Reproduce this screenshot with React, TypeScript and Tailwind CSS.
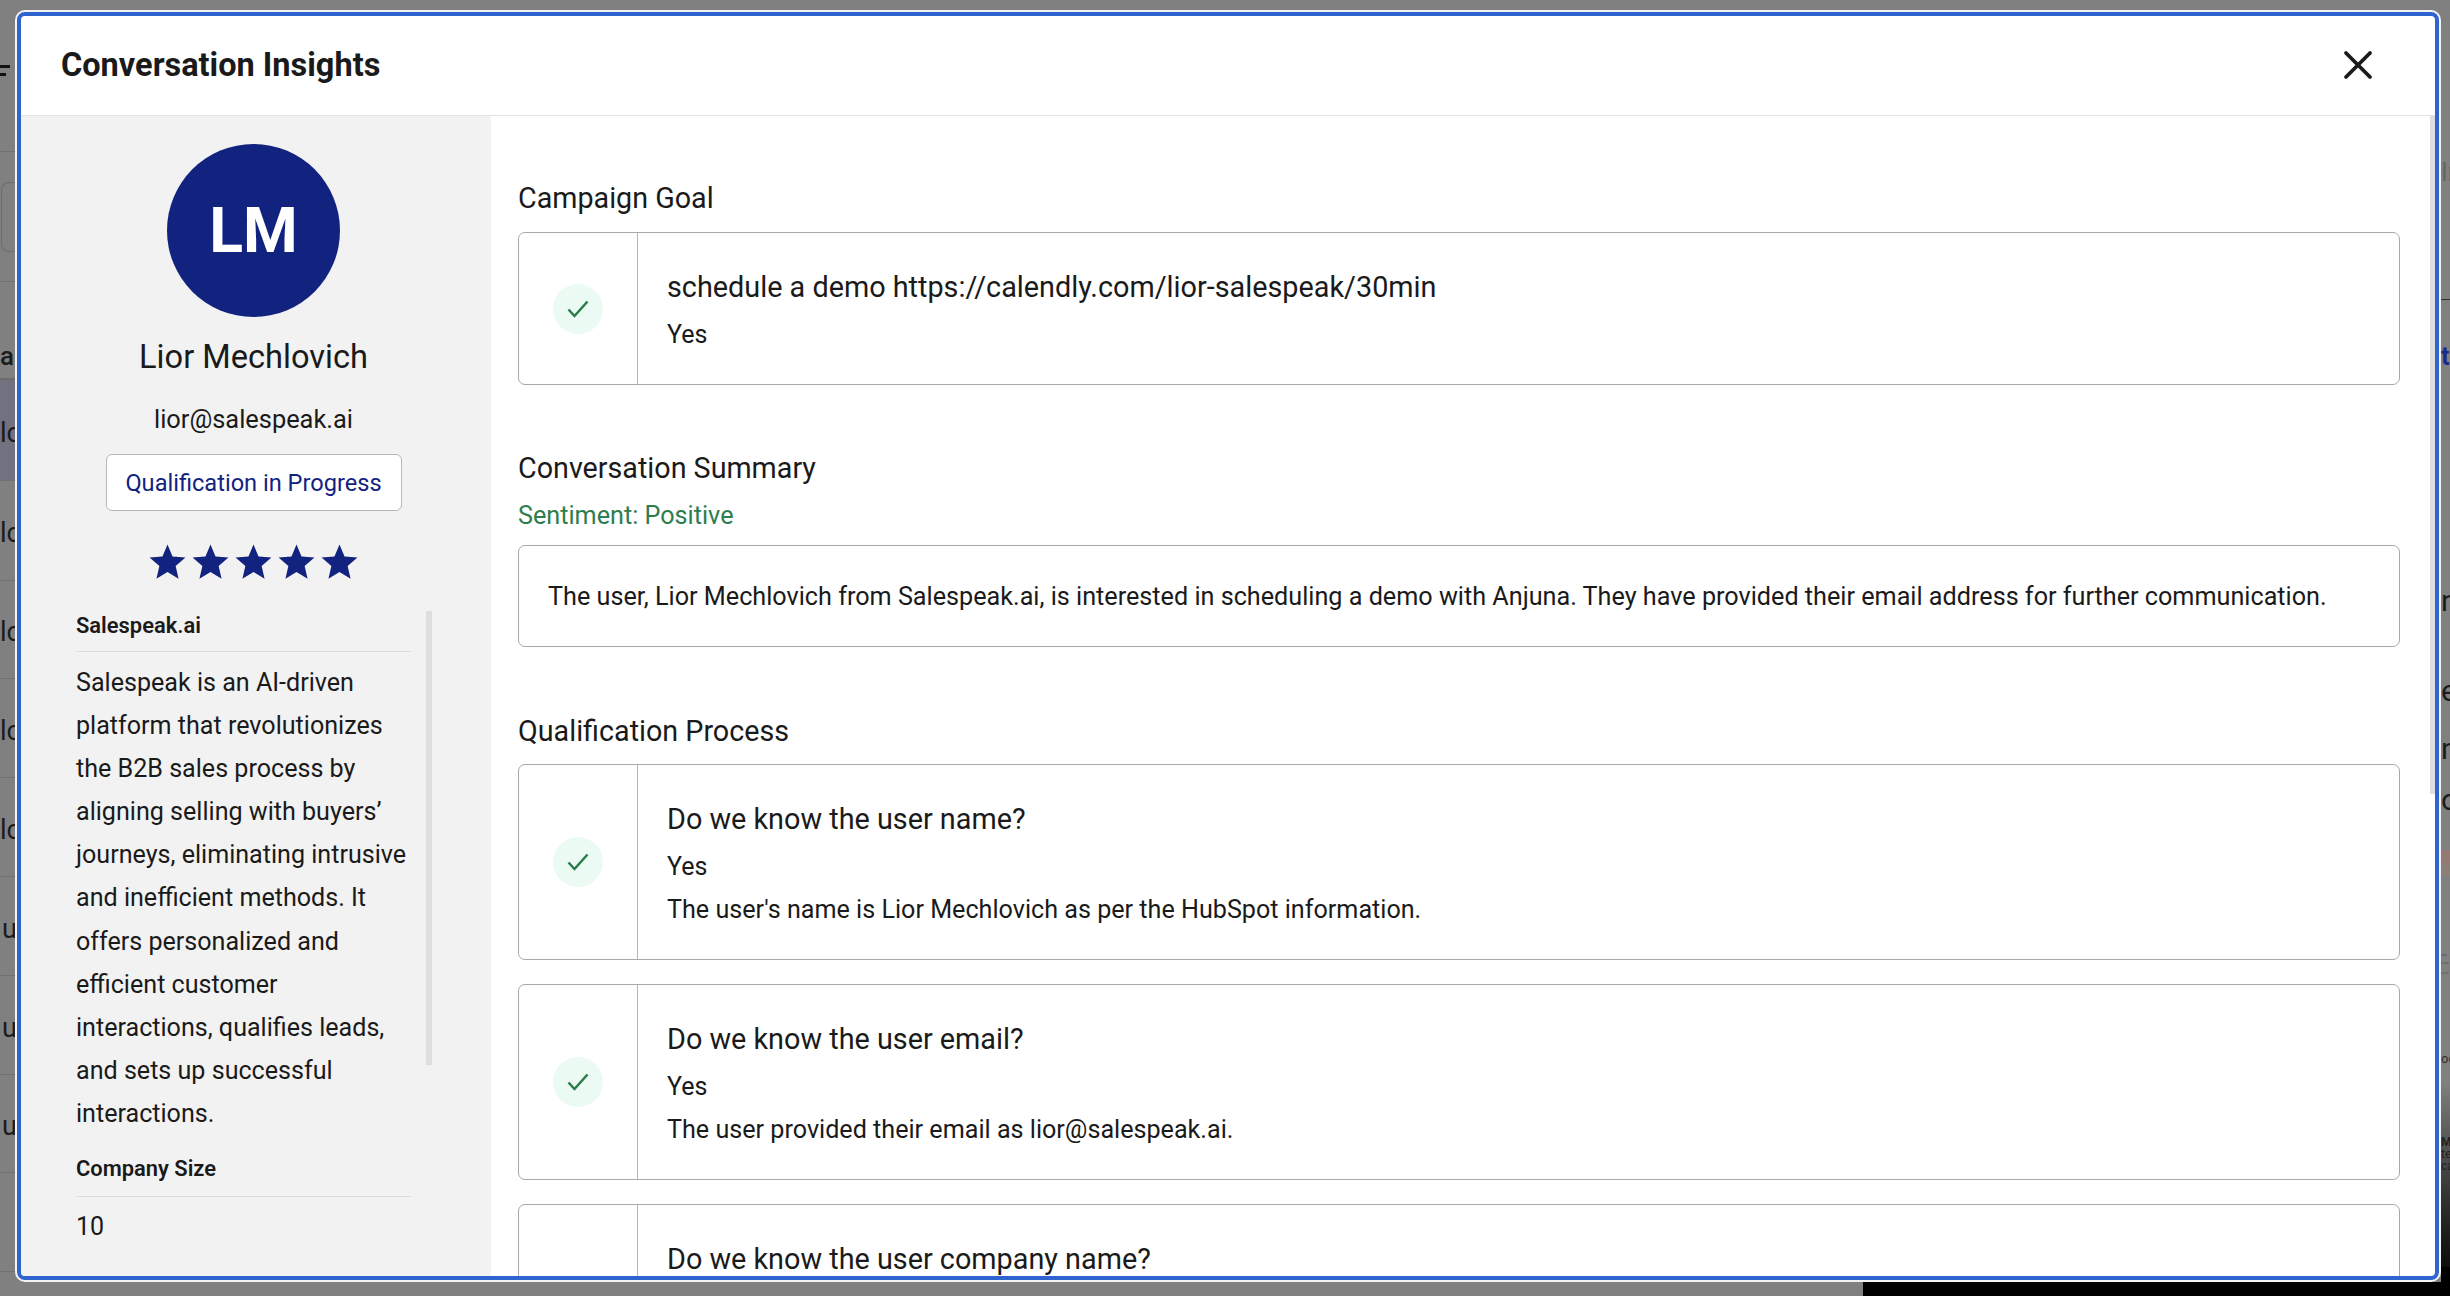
import React from 'react';
import { X } from 'lucide-react';

const NAVY = 'text-[#12237f]';

function CheckBadge() {
  return (
    <div className="flex w-[119px] shrink-0 items-center justify-center border-r border-[#b4b4b4]">
      <div className="flex h-[50px] w-[50px] items-center justify-center rounded-full bg-[#ebfbf3]">
        <svg width="24" height="20" viewBox="0 0 24 20" fill="none">
          <path d="M2.5 10.5 L8.5 17 L21.5 2.5" stroke="#2a7a4a" strokeWidth="2.5" />
        </svg>
      </div>
    </div>
  );
}

function Star() {
  return (
    <svg width="43" height="43" viewBox="0 0 24 24" fill="#12237f">
      <path d="M12 17.27 18.18 21l-1.64-7.03L22 9.24l-7.19-.61L12 2 9.19 8.63 2 9.24l5.46 4.73L5.82 21z" />
    </svg>
  );
}

function QuestionCard({ title, answer, detail }: { title: string; answer: string; detail?: string }) {
  return (
    <div className="flex rounded-[7px] border border-[#a8a8a8] bg-white">
      <CheckBadge />
      <div className="flex-1 pb-[31px] pl-[29px] pr-[28px] pt-[34px]">
        <div className="text-[28.8px] leading-[40px] text-[#1a1a1a]">{title}</div>
        <div className="mt-[10px] text-[25px] leading-[36px] text-[#1a1a1a]">{answer}</div>
        {detail && <div className="mt-[7px] text-[25.15px] leading-[36px] text-[#1a1a1a]">{detail}</div>}
      </div>
    </div>
  );
}

function LeftRow({ h, text, className = '' }: { h: string; text?: string; className?: string }) {
  return (
    <div className={`flex items-center overflow-hidden whitespace-nowrap border-b border-[#707070] pt-[6px] text-[27px] text-[#1c1c1c] ${h} ${className}`}>
      {text}
    </div>
  );
}

function BackgroundPage() {
  return (
    <div className="absolute inset-0 flex justify-between bg-[#808080]">
      <div className="w-[15px]">
        <div className="h-[152px] border-b border-[#707070] pt-[65px]">
          <div className="h-[3px] w-[10px] bg-[#111]" />
          <div className="mt-[5px] h-[3px] w-[6px] bg-[#111]" />
        </div>
        <div className="h-[130px] border-b border-[#707070] pt-[30px]">
          <div className="ml-[1px] h-[70px] rounded-l-[8px] border border-r-0 border-[#6c6c6c]" />
        </div>
        <div className="flex h-[98px] items-end overflow-hidden border-b-2 border-[#6c6c6c] pb-[2px] text-[26px] font-medium text-[#1c1c1c]">as</div>
        <LeftRow h="h-[101px]" text="lc" className="bg-[#717180]" />
        <LeftRow h="h-[100px]" text="lc" />
        <LeftRow h="h-[98px]" text="lc" />
        <LeftRow h="h-[99px]" text="lc" />
        <LeftRow h="h-[99px]" text="lc" />
        <LeftRow h="h-[99px]" text="u" className="pl-[2px]" />
        <LeftRow h="h-[99px]" text="u" className="pl-[2px]" />
        <LeftRow h="h-[98px]" text="u" className="pl-[2px]" />
        <LeftRow h="h-[99px]" />
      </div>
      <div className="flex w-[9px] flex-col overflow-hidden whitespace-nowrap">
        <div className="h-[158px]" />
        <div className="h-[30px] text-[25px] leading-[30px] text-[#666]">Ir</div>
        <div className="h-[111px]" />
        <div className="h-[1px] bg-[#333]" />
        <div className="h-[43px]" />
        <div className="h-[28px] text-[25px] font-bold leading-[28px] text-[#1a2a90]">ti</div>
        <div className="h-[213px]" />
        <div className="h-[34px] text-[30px] leading-[34px] text-[#1c1c1c]">n</div>
        <div className="h-[56px]" />
        <div className="h-[34px] text-[30px] leading-[34px] text-[#1c1c1c]">e</div>
        <div className="h-[24px]" />
        <div className="h-[34px] text-[30px] leading-[34px] text-[#1c1c1c]">n</div>
        <div className="h-[17px]" />
        <div className="h-[34px] text-[30px] leading-[34px] text-[#1c1c1c]">o</div>
        <div className="h-[33px]" />
        <div className="h-[14px] bg-[#937a74]" />
        <div className="h-[12px] bg-[#8a8078]" />
        <div className="h-[78px]" />
        <div className="h-[2px] w-[6px] bg-[#6a6a78]" />
        <div className="mt-[6px] h-[2px] w-[8px] bg-[#6e6e6e]" />
        <div className="mt-[8px] h-[2px] w-[8px] bg-[#727272]" />
        <div className="h-[76px]" />
        <div className="h-[18px] text-[13px] leading-[18px] text-[#333]">od</div>
        <div className="h-[14px]" />
        <div className="flex h-[185px] flex-col bg-gradient-to-b from-[#808080] to-[#0c0c0c] pt-[54px] text-[12px] leading-[12px] text-[#222]">
          <div className="font-bold">Ma</div>
          <div>ter</div>
          <div>ca</div>
        </div>
        <div className="flex-1 bg-black" />
      </div>
      <div className="absolute bottom-0 left-[1863px] right-0 h-[14px] bg-black" />
    </div>
  );
}

export default function App() {
  return (
    <div className="relative h-[1296px] w-[2450px] overflow-hidden font-['Roboto',sans-serif]">
      <BackgroundPage />
      <div className="absolute left-[15px] top-[10px] h-[1272px] w-[2426px] rounded-[10px] bg-[#f4f4f4] p-[2px]">
        <div className="flex h-full flex-col overflow-hidden rounded-[8px] border-4 border-[#2f64d0] bg-white">
          {/* Header */}
          <div className="flex h-[100px] shrink-0 items-center justify-between border-b border-[#e4e4e4] pb-[2px] pl-[40px] pr-[53px]">
            <h2 className="text-[32.5px] font-bold leading-[40px] text-[#1a1a1a]">Conversation Insights</h2>
            <X className="h-[48px] w-[48px] text-[#1a1a1a]" strokeWidth={1.9} />
          </div>

          <div className="flex min-h-0 flex-1">
            {/* Profile sidebar */}
            <div className="flex w-[470px] shrink-0 flex-col items-center overflow-hidden bg-[#f2f2f2] pr-[5px] pt-[28px]">
              <div className="flex h-[173px] w-[173px] shrink-0 items-center justify-center rounded-full bg-[#12237f] text-[62.5px] font-bold text-white">
                LM
              </div>
              <div className="mt-[18px] text-[32.6px] leading-[44px] text-[#1a1a1a]">Lior Mechlovich</div>
              <div className="mt-[22px] text-[25.4px] leading-[36px] text-[#1a1a1a]">lior@salespeak.ai</div>
              <div className={`mt-[17px] flex h-[57px] w-[296px] items-center justify-center rounded-[6px] border border-[#b8b8b8] bg-white pt-[2px] text-[23.6px] ${NAVY}`}>
                Qualification in Progress
              </div>
              <div className="mt-[30px] flex">
                <Star />
                <Star />
                <Star />
                <Star />
                <Star />
              </div>
              <div className="mt-[27px] flex w-full pl-[55px]">
                <div className="w-[335px] shrink-0">
                  <div className="border-b border-[#dcdcdc] pb-[10px] text-[21.9px] font-semibold leading-[30px] text-[#1a1a1a]">Salespeak.ai</div>
                  <p className="mt-[9px] text-[25.1px] leading-[43.1px] text-[#1a1a1a]">
                    Salespeak is an AI-driven platform that revolutionizes the B2B sales process by aligning selling with buyers’ journeys, eliminating intrusive and inefficient methods. It offers personalized and efficient customer interactions, qualifies leads, and sets up successful interactions.
                  </p>
                  <div className="mt-[19px] border-b border-[#dcdcdc] pb-[12px] text-[21.9px] font-semibold leading-[30px] text-[#1a1a1a]">Company Size</div>
                  <div className="mt-[8px] text-[25px] leading-[43px] text-[#1a1a1a]">10</div>
                </div>
                <div className="ml-[15px] h-[454px] w-[6px] shrink-0 bg-[#dedede]" />
              </div>
            </div>

            {/* Main content */}
            <div className="flex min-w-0 flex-1">
              <div className="min-w-0 flex-1 overflow-hidden pl-[27px] pr-[30px] pt-[62px]">
                <h3 className="text-[28.7px] leading-[41px] text-[#1a1a1a]">Campaign Goal</h3>
                <div className="mt-[13px]">
                  <QuestionCard title="schedule a demo https://calendly.com/lior-salespeak/30min" answer="Yes" />
                </div>

                <h3 className="mt-[63px] text-[28.7px] leading-[40px] text-[#1a1a1a]">Conversation Summary</h3>
                <div className="mt-[10px] text-[25.2px] leading-[36px] text-[#2e7d4f]">Sentiment: Positive</div>
                <div className="mt-[11px] rounded-[7px] border border-[#a8a8a8] px-[29px] pb-[31px] pt-[33px] text-[25.2px] leading-[36px] text-[#1a1a1a]">
                  The user, Lior Mechlovich from Salespeak.ai, is interested in scheduling a demo with Anjuna. They have provided their email address for further communication.
                </div>

                <h3 className="mt-[64px] text-[28.7px] leading-[40px] text-[#1a1a1a]">Qualification Process</h3>
                <div className="mt-[13px] flex flex-col gap-[24px]">
                  <QuestionCard
                    title="Do we know the user name?"
                    answer="Yes"
                    detail="The user's name is Lior Mechlovich as per the HubSpot information."
                  />
                  <QuestionCard
                    title="Do we know the user email?"
                    answer="Yes"
                    detail="The user provided their email as lior@salespeak.ai."
                  />
                  <QuestionCard title="Do we know the user company name?" answer="Yes" detail="The user's company is Salespeak.ai." />
                </div>
              </div>
              <div className="w-[5px] shrink-0">
                <div className="h-[678px] bg-[#dedede]" />
              </div>
            </div>
          </div>
        </div>
      </div>
    </div>
  );
}
